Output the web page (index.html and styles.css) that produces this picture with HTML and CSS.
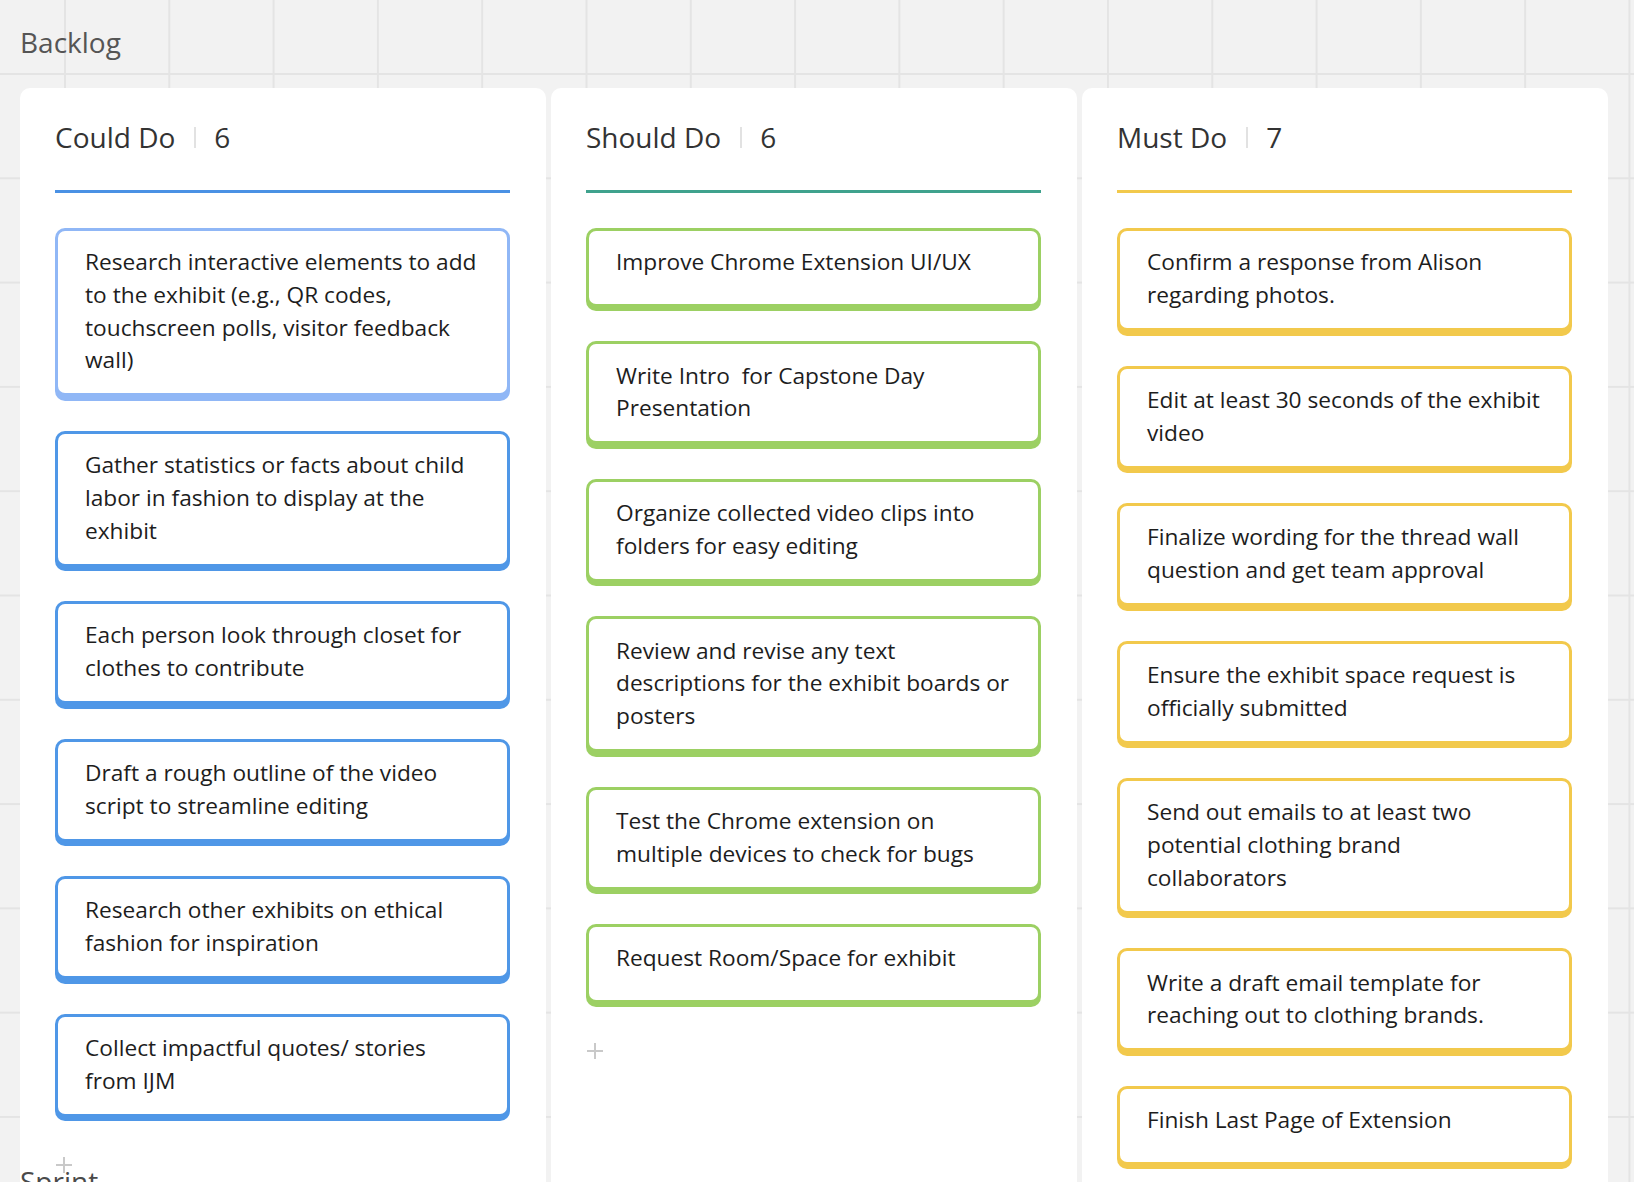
FILE: index.html
```html
<!DOCTYPE html>
<html lang="en">
<head>
<meta charset="utf-8">
<title>Backlog</title>
<link rel="stylesheet" href="styles.css">
</head>
<body>
<div class="board">
  <div class="frame-title">Backlog</div>
  <div class="columns">
    <section class="column col-could">
      <header class="col-head"><span class="col-name">Could Do</span><span class="sep"></span><span class="col-count">6</span></header>
      <div class="col-rule"></div>
      <div class="cards">
        <div class="card card-light"><div class="card-body">Research interactive elements to add<br>to the exhibit (e.g., QR codes,<br>touchscreen polls, visitor feedback<br>wall)</div></div>
        <div class="card"><div class="card-body">Gather statistics or facts about child<br>labor in fashion to display at the<br>exhibit</div></div>
        <div class="card"><div class="card-body">Each person look through closet for<br>clothes to contribute</div></div>
        <div class="card"><div class="card-body">Draft a rough outline of the video<br>script to streamline editing</div></div>
        <div class="card"><div class="card-body">Research other exhibits on ethical<br>fashion for inspiration</div></div>
        <div class="card"><div class="card-body">Collect impactful quotes/ stories<br>from IJM</div></div>
      </div>
      <div class="add"><svg viewBox="0 0 18 18" width="18" height="18"><path d="M9 1v16M1 9h16" stroke="#c9c9c9" stroke-width="2" fill="none"/></svg></div>
    </section>
    <section class="column col-should">
      <header class="col-head"><span class="col-name">Should Do</span><span class="sep"></span><span class="col-count">6</span></header>
      <div class="col-rule"></div>
      <div class="cards">
        <div class="card"><div class="card-body">Improve Chrome Extension UI/UX</div></div>
        <div class="card"><div class="card-body">Write Intro&nbsp; for Capstone Day<br>Presentation</div></div>
        <div class="card"><div class="card-body">Organize collected video clips into<br>folders for easy editing</div></div>
        <div class="card"><div class="card-body">Review and revise any text<br>descriptions for the exhibit boards or<br>posters</div></div>
        <div class="card"><div class="card-body">Test the Chrome extension on<br>multiple devices to check for bugs</div></div>
        <div class="card"><div class="card-body">Request Room/Space for exhibit</div></div>
      </div>
      <div class="add"><svg viewBox="0 0 18 18" width="18" height="18"><path d="M9 1v16M1 9h16" stroke="#c9c9c9" stroke-width="2" fill="none"/></svg></div>
    </section>
    <section class="column col-must">
      <header class="col-head"><span class="col-name">Must Do</span><span class="sep"></span><span class="col-count">7</span></header>
      <div class="col-rule"></div>
      <div class="cards">
        <div class="card"><div class="card-body">Confirm a response from Alison<br>regarding photos.</div></div>
        <div class="card"><div class="card-body">Edit at least 30 seconds of the exhibit<br>video</div></div>
        <div class="card"><div class="card-body">Finalize wording for the thread wall<br>question and get team approval</div></div>
        <div class="card"><div class="card-body">Ensure the exhibit space request is<br>officially submitted</div></div>
        <div class="card"><div class="card-body">Send out emails to at least two<br>potential clothing brand<br>collaborators</div></div>
        <div class="card"><div class="card-body">Write a draft email template for<br>reaching out to clothing brands.</div></div>
        <div class="card"><div class="card-body">Finish Last Page of Extension</div></div>
      </div>
    </section>
  </div>
  <div class="frame-title sprint">Sprint</div>
</div>
</body>
</html>
```
FILE: styles.css
```css
html, body {
  margin: 0;
  padding: 0;
}
body {
  width: 1634px;
  height: 1182px;
  overflow: hidden;
  font-family: "Open Sans", "Noto Sans", sans-serif;
  background-color: #f2f2f2;
  background-image:
    linear-gradient(to right, #e4e4e4 2px, transparent 2px),
    linear-gradient(to bottom, #e4e4e4 2px, transparent 2px);
  background-size: 104.3px 104.3px;
  background-position: 64px 73px;
}
.board {
  position: relative;
  height: 1182px;
  padding: 23px 0 0 20px;
  box-sizing: border-box;
}
.frame-title {
  font-size: 28px;
  line-height: 38px;
  color: #555;
}
.sprint {
  position: absolute;
  left: 20px;
  top: 1162px;
  color: #4a4a4a;
}
.columns {
  display: flex;
  gap: 5.5px;
  margin-top: 27px;
}
.column {
  width: 525.5px;
  min-height: 1150px;
  box-sizing: border-box;
  background: #fff;
  border-radius: 10px;
  padding: 29.5px 35.5px 0 35px;
}
.col-head {
  display: flex;
  align-items: center;
  font-size: 28px;
  line-height: 38px;
  color: #333;
}
.sep {
  width: 2px;
  height: 21px;
  background: #e2e2e2;
  margin: 2px 18px 0 19px;
}
.col-rule {
  height: 3px;
  margin-top: 34.5px;
  background: #4a91e4;
}
.col-should .col-rule { background: #3fa28d; }
.col-must .col-rule { background: #f2c94c; }
.cards {
  display: flex;
  flex-direction: column;
  gap: 30px;
  margin-top: 35px;
}
.card {
  background: #4f97e7;
  border-radius: 10px;
  padding: 3px 3px 7.5px;
}
.card-light { background: #90b7f6; }
.col-should .card { background: #9cd063; }
.col-must .card { background: #f2c94c; }
.card-body {
  background: #fff;
  border-radius: 7px;
  min-height: 72.9px;
  box-sizing: border-box;
  padding: 15.3px 10px 16.3px 27px;
  font-size: 22.7px;
  line-height: 32.7px;
  color: #1d1d1d;
  white-space: nowrap;
}
.add {
  margin-top: 35px;
  width: 18px;
  height: 18px;
}
.add svg { display: block; }
```
